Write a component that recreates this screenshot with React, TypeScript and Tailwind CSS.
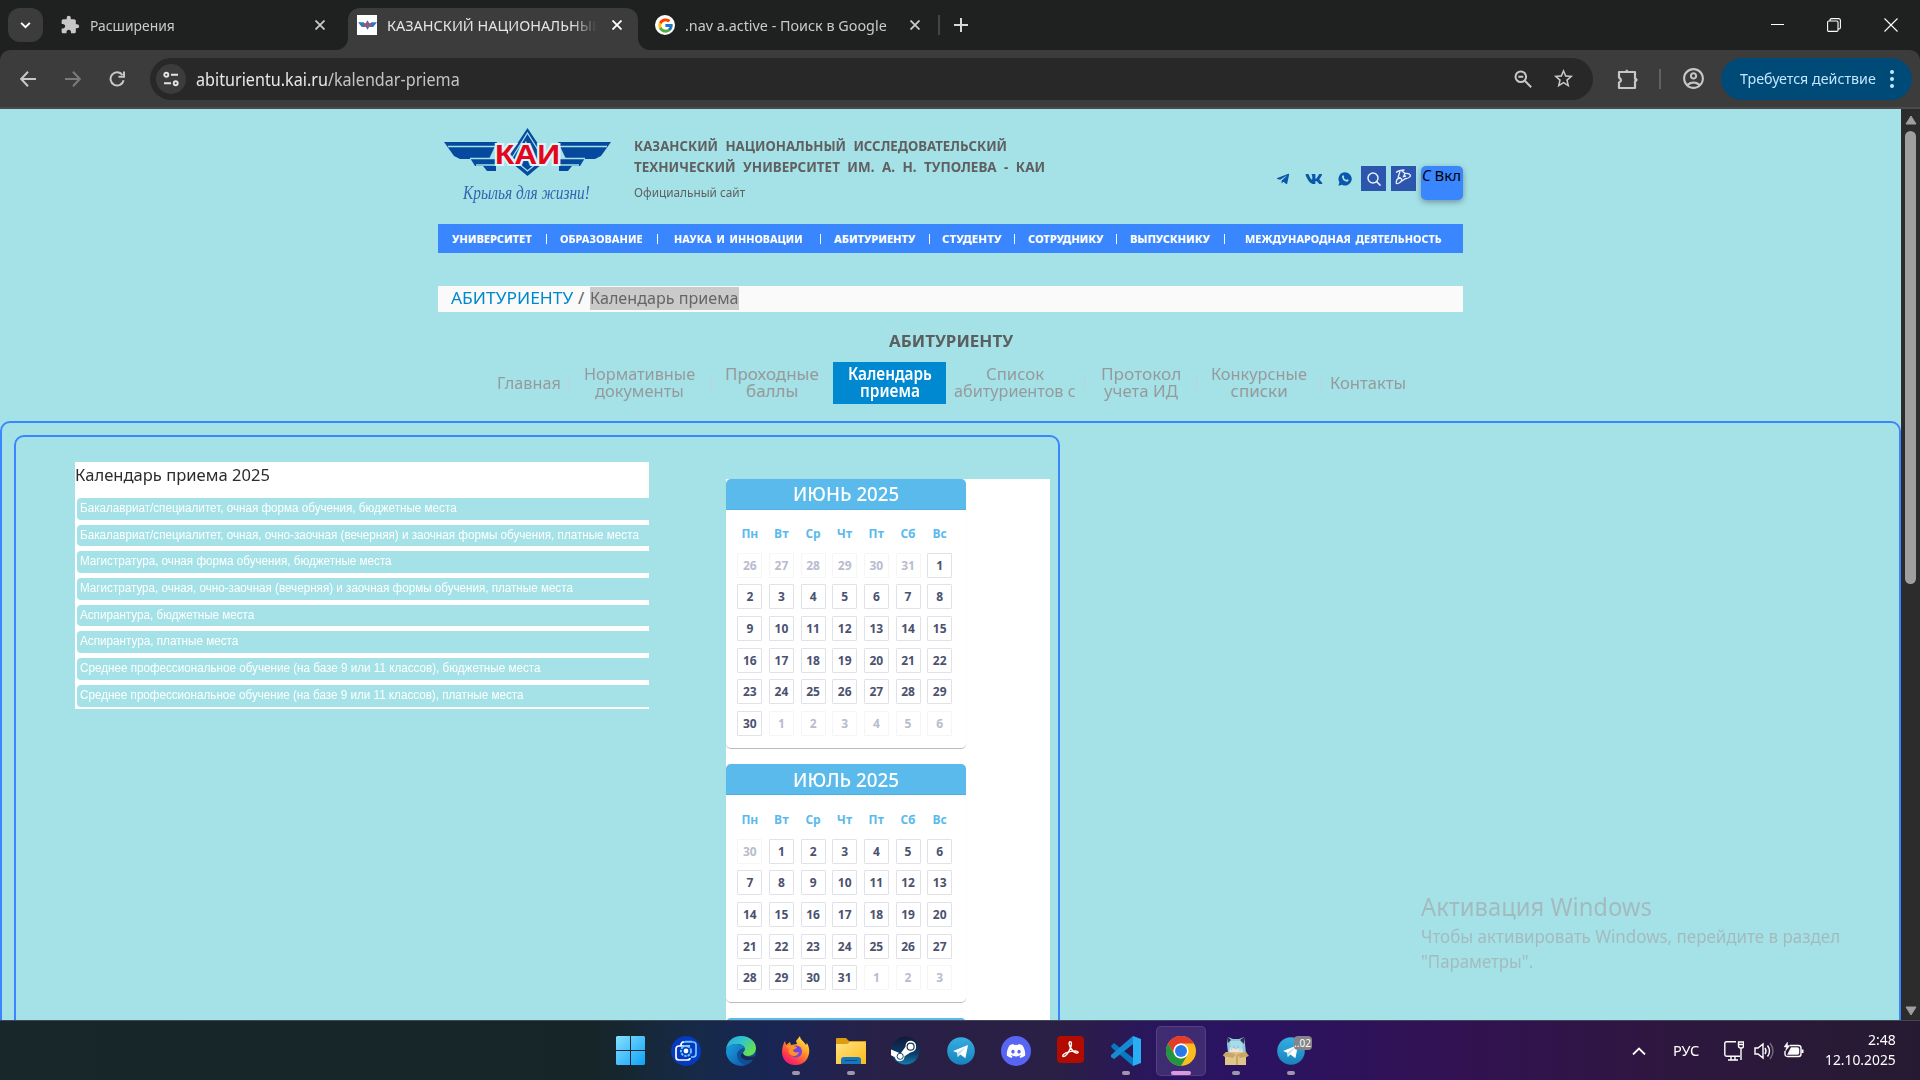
import { useLayoutEffect, useRef } from "react";
import type { ReactNode } from "react";
import clsx from "clsx";
import { FaDiscord, FaTelegramPlane, FaVk } from "react-icons/fa";
import { FcGoogle } from "react-icons/fc";
import { MdExtension, MdOutlineAccountCircle, MdStarBorder } from "react-icons/md";

const UI = "font-['Segoe_UI','Noto_Sans',sans-serif]";
const COMIC = "font-['Comic_Sans_MS','Noto_Sans',sans-serif]";

/* A single line of text that is squeezed or widened to fill the width of its box. */
function Fit({ className, children }: { className: string; children: ReactNode }) {
  const inner = useRef<HTMLSpanElement>(null);
  useLayoutEffect(() => {
    const el = inner.current;
    if (!el || !el.parentElement) return;
    el.style.transform = `scaleX(${el.parentElement.clientWidth / el.offsetWidth})`;
  }, []);
  return (
    <span className={clsx("block shrink-0 whitespace-nowrap", className)}>
      <span ref={inner} className="inline-block origin-left">
        {children}
      </span>
    </span>
  );
}

function Cross({ className }: { className?: string }) {
  return (
    <svg viewBox="0 0 10 10" className={clsx("size-[10px] shrink-0", className)} fill="none" stroke="currentColor" strokeWidth="1.8">
      <path d="M0.5 0.5l9 9M9.5 0.5l-9 9" />
    </svg>
  );
}

function TabBar() {
  return (
    <div className="flex h-[50px] shrink-0 bg-[#1f2120] text-[#c9cac9]">
      <div className="mt-2 ml-2 flex h-[34px] w-[35px] shrink-0 items-center justify-center rounded-xl bg-[#3c3c3c] text-white">
        <svg viewBox="0 0 12 8" className="h-[7px] w-[11px]" fill="none" stroke="currentColor" strokeWidth="2.2"><path d="M1 1l5 5 5-5" /></svg>
      </div>
      <div className="ml-[17px] flex h-[50px] w-[276px] shrink-0 items-center">
        <MdExtension className="size-5 shrink-0 text-[#c7c7c7]" />
        <Fit className="ml-[10px] w-[85px] text-[15px]">Расширения</Fit>
        <Cross className="ml-[140px]" />
      </div>
      <div className="flex h-[50px] w-[12px] shrink-0 items-end bg-[#3c3c3c]">
        <div className="h-[50px] w-[12px] rounded-br-xl bg-[#1f2120]" />
      </div>
      <div className="mt-2 flex h-[42px] w-[290px] shrink-0 items-center rounded-t-xl bg-[#3c3c3c] pb-2 text-[#e4e4e4]">
        <div className="ml-[9px] flex size-5 shrink-0 items-center justify-center bg-white">
          <svg viewBox="0 0 20 10" className="h-[10px] w-[19px]">
            <path d="M0 2h6l2 5H4zM20 2h-6l-2 5h4zM10 0l3 5-3 5-3-5z" fill="#2c7bc0" />
            <path d="M6 3h2v4H6zM9 3h2v4H9zM12 3h2v4h-2z" fill="#c9465a" />
          </svg>
        </div>
        <div className="ml-[10px] w-[210px] shrink-0 overflow-hidden [mask-image:linear-gradient(to_right,black_88%,transparent)]">
          <Fit className="w-[216px] text-[15px]">КАЗАНСКИЙ НАЦИОНАЛЬНЫЙ</Fit>
        </div>
        <Cross className="ml-[15px] text-white" />
      </div>
      <div className="h-[50px] w-[12px] shrink-0 bg-[#3c3c3c]">
        <div className="h-[50px] w-[12px] rounded-bl-xl bg-[#1f2120]" />
      </div>
      <div className="ml-[5px] flex h-[50px] items-center">
        <div className="flex size-5 shrink-0 items-center justify-center rounded-full bg-white"><FcGoogle className="size-[17px]" /></div>
        <Fit className="ml-[10px] w-[202px] text-[15px]">.nav a.active - Поиск в Google</Fit>
        <Cross className="ml-[23px]" />
        <div className="ml-[18px] h-5 w-[2px] bg-[#454545]" />
        <svg viewBox="0 0 14 14" className="ml-[14px] size-[14px]" stroke="#d8d8d8" strokeWidth="2"><path d="M7 0v14M0 7h14" /></svg>
      </div>
      <div className="ml-auto flex h-[49px] items-center pr-[22px] text-white">
        <div className="h-px w-[13px] bg-white" />
        <svg viewBox="0 0 14 14" className="ml-[43px] size-[14px]" fill="none" stroke="currentColor" strokeWidth="1.1">
          <rect x="0.6" y="3" width="10.4" height="10.4" rx="1.2" />
          <path d="M3 3V2.2Q3 .6 4.6 .6h6.8q2 0 2 2v7Q13.400 11 12 11h-1" />
        </svg>
        <svg viewBox="0 0 14 14" className="ml-[43px] size-[14px]" stroke="currentColor" strokeWidth="1.1"><path d="M.5.5l13 13M13.500.5l-13 13" /></svg>
      </div>
    </div>
  );
}

function Toolbar() {
  return (
    <div className="h-[59px] shrink-0 bg-[#1f2120]">
      <div className="flex h-[59px] items-center rounded-t-[10px] border-b-2 border-[#4b4b4b] bg-[#3c3c3c] text-[#c7c7c7]">
        <svg viewBox="0 0 16 16" className="ml-5 size-4 shrink-0" fill="none" stroke="currentColor" strokeWidth="2"><path d="M8 .8L1.200 8 8 15.200M1.200 8H16" /></svg>
        <svg viewBox="0 0 16 16" className="ml-[29px] size-4 shrink-0" fill="none" stroke="#7b7b7b" strokeWidth="2"><path d="M8 .8L14.800 8 8 15.200M14.800 8H0" /></svg>
        <svg viewBox="0 0 16 16" className="ml-[28px] size-4 shrink-0" fill="none" stroke="currentColor" strokeWidth="2"><path d="M13.500 4A6.600 6.600 0 1 0 14.600 9.200M15 .5v5.300H9.500" /></svg>
        <div className="ml-[25px] flex h-[42px] w-[1443px] shrink-0 items-center rounded-full bg-[#282828]">
          <div className="ml-[6px] flex size-[30px] shrink-0 items-center justify-center rounded-full bg-[#3c3c3c]">
            <svg viewBox="0 0 16 16" className="size-4" fill="none" stroke="#e3e3e3" strokeWidth="1.900"><circle cx="3.300" cy="3.700" r="2" /><path d="M8 3.700h7M1 12.300h7" /><circle cx="12.700" cy="12.300" r="2" /></svg>
          </div>
          <Fit className="mt-[2px] ml-[10px] w-[264px] text-[17.5px] text-[#e8e8e8]">abiturientu.kai.ru<span className="text-[#c4c4c4]">/kalendar-priema</span></Fit>
          <div className="ml-auto flex items-center pr-[18px]">
            <svg viewBox="0 0 18 18" className="size-[18px]" fill="none" stroke="currentColor" strokeWidth="2"><circle cx="6.800" cy="6.800" r="5.300" /><path d="M10.800 10.800l6.400 6.400M4.300 6.800h5" /></svg>
            <MdStarBorder className="ml-5 size-[23px]" />
          </div>
        </div>
        <svg viewBox="0 0 22 22" className="ml-6 size-[22px] shrink-0" fill="none" stroke="currentColor" strokeWidth="2.200">
          <path d="M2 4h16v6.500q3 1 0 3V20H2v-5.500q4-2 0-5z" strokeLinejoin="round" /><path d="M8 4q1.800-4 3.600 0zM18 10q4 2 0 4z" fill="currentColor" strokeWidth="1" />
        </svg>
        <div className="ml-[20px] h-5 w-[2px] bg-[#606060]" />
        <MdOutlineAccountCircle className="ml-[20px] size-[25px] shrink-0" />
        <div className="ml-[15px] flex h-[42px] w-[191px] shrink-0 items-center rounded-full bg-[#004a77] pl-[19px] text-[#c2e7ff]">
          <Fit className="w-[136px] text-[15px]">Требуется действие</Fit>
          <div className="ml-[14px] flex flex-col gap-[3px]">
            <i className="size-1 rounded-full bg-current" /><i className="size-1 rounded-full bg-current" /><i className="size-1 rounded-full bg-current" />
          </div>
        </div>
      </div>
    </div>
  );
}

function Logo() {
  return (
    <div className="mt-[19px] ml-[6px] w-[167px] shrink-0">
      <svg viewBox="0 0 167 48" className="h-[48px] w-[167px]">
        <path d="M0 14h53l-8 17H16L10 28z" fill="#064a9f" />
        <path d="M167 14h-53l8 17h29l6-3z" fill="#064a9f" />
        <path d="M26 30h26v13H43l-4-5h-8zM141 30h-26v13h9l4-5h8z" fill="#064a9f" />
        <path d="M4 18.500h50M113 18.500h50M26 30.500h26M115 30.500h26M32 37h22M113 37h22" stroke="#a5e2e8" strokeWidth="1.300" />
        <path d="M83.500 0L104 31 83.500 48 63 31z" fill="#064a9f" />
        <path d="M83.500 5L99 30 83.500 43 68 30z" fill="none" stroke="#a5e2e8" strokeWidth="1.300" />
        <text x="83.500" y="36" textAnchor="middle" textLength="65" lengthAdjust="spacingAndGlyphs" fontFamily="Liberation Sans, sans-serif" fontWeight="700" fontSize="27" fill="#e3061c" stroke="#dff3f8" strokeWidth="4" paintOrder="stroke">КАИ</text>
      </svg>
      <Fit className="mt-[3px] ml-[19px] w-[127px] font-['Segoe_Script','Liberation_Serif',serif] text-[19px] leading-[28px] text-[#2f66ad] italic">Крылья для жизни!</Fit>
    </div>
  );
}

const MAIN_NAV = [
  { label: "УНИВЕРСИТЕТ", box: "ml-[14px] w-[80px]", sep: "ml-[14px]" },
  { label: "ОБРАЗОВАНИЕ", box: "ml-[13px] w-[83px]", sep: "ml-[14px]" },
  { label: "НАУКА И ИННОВАЦИИ", box: "ml-[16px] w-[129px]", sep: "ml-[17px]" },
  { label: "АБИТУРИЕНТУ", box: "ml-[13px] w-[81px]", sep: "ml-[14px]" },
  { label: "СТУДЕНТУ", box: "ml-[12px] w-[60px]", sep: "ml-[12px]" },
  { label: "СОТРУДНИКУ", box: "ml-[13px] w-[75px]", sep: "ml-[13px]" },
  { label: "ВЫПУСКНИКУ", box: "ml-[13px] w-[80px]", sep: "ml-[14px]" },
  { label: "МЕЖДУНАРОДНАЯ ДЕЯТЕЛЬНОСТЬ", box: "ml-[20px] w-[197px]", sep: "" },
];

const SUB_NAV = [
  { lines: [["Главная", "w-[64px]"]], box: "w-[64px]", sep: "ml-[8px] mr-[14px]" },
  { lines: [["Нормативные", "w-[111px]"], ["документы", "w-[89px]"]], box: "w-[111px]", sep: "ml-[15px] mr-[14px]" },
  { lines: [["Проходные", "w-[94px]"], ["баллы", "w-[52px]"]], box: "w-[94px] mr-[14px]", sep: "" },
  { lines: [["Календарь", "w-[84px]"], ["приема", "w-[60px]"]], box: "w-[113px] bg-[#0088d1] text-white mr-[8px]", sep: "" },
  { lines: [["Список", "w-[58px]"], ["абитуриентов с", "w-[122px]"]], box: "w-[122px]", sep: "ml-[8px] mr-[16px]" },
  { lines: [["Протокол", "w-[80px]"], ["учета ИД", "w-[74px]"]], box: "w-[80px]", sep: "ml-[15px] mr-[14px]" },
  { lines: [["Конкурсные", "w-[96px]"], ["списки", "w-[57px]"]], box: "w-[96px]", sep: "ml-[14px] mr-[8px]" },
  { lines: [["Контакты", "w-[76px]"]], box: "w-[76px]", sep: "" },
];

function SiteHeader() {
  return (
    <div className={clsx("ml-[438px] w-[1025px]", COMIC)}>
      <div className="flex h-[115px]">
        <Logo />
        <div className="mt-[27px] ml-[23px] text-[#606060]">
          <Fit className="w-[373px] text-[13.5px] leading-[21px] font-bold [word-spacing:4px]">КАЗАНСКИЙ НАЦИОНАЛЬНЫЙ ИССЛЕДОВАТЕЛЬСКИЙ</Fit>
          <Fit className="w-[411px] text-[13.5px] leading-[21px] font-bold [word-spacing:4px]">ТЕХНИЧЕСКИЙ УНИВЕРСИТЕТ ИМ. А. Н. ТУПОЛЕВА - КАИ</Fit>
          <Fit className="mt-[4px] w-[111px] text-[12px] leading-[21px]">Официальный сайт</Fit>
        </div>
        <div className="mt-[57px] ml-auto flex h-[25px] items-center text-[#0a57ab]">
          <FaTelegramPlane className="size-[14px]" />
          <FaVk className="ml-[15px] size-[18px]" />
          <svg viewBox="0 0 14 14" className="ml-[15px] size-[14px]">
            <path d="M7.200.3a6.600 6.600 0 1 1-3.200 12.400L.4 13.700l1-3.500A6.600 6.600 0 0 1 7.200.3z" fill="currentColor" />
            <path d="M4.600 3.600q1-.8 1.500.6.400 1-.3 1.500.8 1.600 2.400 2.200.7-1 1.400-.6 1.500.6.900 1.400-1.200 1.700-3.300.6-2.800-1.300-3.200-4-.1-1 .6-1.700z" fill="#a5e2e8" />
          </svg>
          <div className="ml-[9px] flex size-[25px] items-center justify-center bg-[#2c55ae]">
            <svg viewBox="0 0 14 14" className="size-[14px]" fill="none" stroke="#e8f1fb" strokeWidth="1.500"><circle cx="6" cy="6" r="5" /><path d="M9.600 9.600l4 4" /></svg>
          </div>
          <div className="ml-[5px] flex size-[25px] items-start justify-center bg-[#2c55ae] pt-[3px]">
            <svg viewBox="0 0 17 16" className="h-4 w-[17px]" fill="none" stroke="#e8f1fb" strokeWidth="1.300">
              <path d="M1 3.500Q4 1 9.500 1M5 2.500L3 8.500M5.500 8.500Q1.500 9 1.200 13.500 1 15.500 4 14q3.500-2 2.500-4-1-1.500-4 0M6.500 1.500l3.500 3Q15 4 15.500 7q-2 3-5 2.500L7 12M10 4.500L8.500 7.500l2.500-.5" />
            </svg>
          </div>
          <div className="mt-[9px] ml-[5px] h-[34px] w-[42px] rounded-[5px] bg-[#3a86ff] pt-px pl-px text-black shadow-[0_2px_6px_rgba(0,0,0,0.35)]">
            <Fit className="w-[39px] text-[15px] leading-[16px]"><i>С</i> Вкл</Fit>
          </div>
        </div>
      </div>

      <div className="flex h-[29px] items-center bg-[#3a86ff] text-white">
        {MAIN_NAV.map((item) => (
          <div key={item.label} className="flex items-center">
            <Fit className={clsx("text-[11px] leading-[16px] font-extrabold [word-spacing:2px]", item.box)}>{item.label}</Fit>
            {item.sep && <i className={clsx("h-[10px] w-px bg-white", item.sep)} />}
          </div>
        ))}
      </div>

      <div className="mt-[33px] flex h-[26px] items-start bg-[#fafafa] pt-px pl-[13px] text-[17px] leading-[22px] text-[#666]">
        <Fit className="w-[122px] text-[#0088cc]">АБИТУРИЕНТУ</Fit>
        <span className="ml-[5px] w-[12px]">/</span>
        <Fit className="h-[23px] w-[149px] bg-[#cacaca]">Календарь приема</Fit>
      </div>

      <div className="flex h-[50px] justify-center pt-[20px]">
        <Fit className="w-[124px] text-[16px] leading-[19px] font-bold text-[#5b5f60]">АБИТУРИЕНТУ</Fit>
      </div>

      <div className="flex h-[42px] items-center pl-[59px] text-[17px] leading-[17px] text-[#969a9c]">
        {SUB_NAV.map((item) => (
          <div key={item.lines[0][0]} className="flex shrink-0 items-center">
            <div className={clsx("flex h-[42px] flex-col items-center justify-center pb-[2px]", item.box)}>
              {item.lines.map(([text, width]) => (
                <Fit key={text} className={clsx(width, "h-[17px]", item.box.includes("text-white") && "font-semibold")}>{text}</Fit>
              ))}
            </div>
            {item.sep && <i className={clsx("h-4 w-px bg-[#b9d3d8]", item.sep)} />}
          </div>
        ))}
      </div>
    </div>
  );
}

const PROGRAMS = [
  ["Бакалавриат/специалитет, очная форма обучения, бюджетные места", "w-[377px]"],
  ["Бакалавриат/специалитет, очная, очно-заочная (вечерняя) и заочная формы обучения, платные места", "w-[559px]"],
  ["Магистратура, очная форма обучения, бюджетные места", "w-[312px]"],
  ["Магистратура, очная, очно-заочная (вечерняя) и заочная формы обучения, платные места", "w-[493px]"],
  ["Аспирантура, бюджетные места", "w-[174px]"],
  ["Аспирантура, платные места", "w-[158px]"],
  ["Среднее профессиональное обучение (на базе 9 или 11 классов), бюджетные места", "w-[460px]"],
  ["Среднее профессиональное обучение (на базе 9 или 11 классов), платные места", "w-[443px]"],
];

const WEEKDAYS = ["Пн", "Вт", "Ср", "Чт", "Пт", "Сб", "Вс"];

interface CalendarProps {
  title: string;
  before: number[];
  days: number;
  after: number;
  className: string;
  titleClass: string;
  gridClass: string;
}

function Calendar({ title, before, days, after, className, titleClass, gridClass }: CalendarProps) {
  const cells = [
    ...before.map((day) => ({ day, muted: true })),
    ...Array.from({ length: days }, (_, i) => ({ day: i + 1, muted: false })),
    ...Array.from({ length: after }, (_, i) => ({ day: i + 1, muted: true })),
  ];
  return (
    <div className={clsx("w-[240px] shrink-0 rounded-[5px] border-b border-[#bcbcbc] bg-white shadow-[0_0_1px_rgba(0,0,0,0.12)]", className)}>
      <div className="flex h-[31px] justify-center rounded-t-[5px] border-b border-[#4fb0e4] bg-[#5abaec] text-white">
        <Fit className={clsx("w-[106px] text-[19px] font-medium", titleClass, COMIC)}>{title}</Fit>
      </div>
      <div className={clsx("ml-[8px] grid grid-cols-[repeat(7,31.650px)] text-center font-['Open_Sans','Noto_Sans',sans-serif] text-[12px] font-bold", gridClass)}>
        {WEEKDAYS.map((d) => (
          <div key={d} className="h-[30.400px] leading-[23px] text-[#5abaec]">{d}</div>
        ))}
        {cells.map(({ day, muted }, i) => (
          <div key={i} className="flex h-[31.600px] justify-center">
            <div className={clsx("size-[25px] rounded-[1px] border leading-[24px]", muted ? "border-[#f5f5f8] text-[#b8bccd]" : "border-[#e1e1ea] text-[#4b5270]")}>{day}</div>
          </div>
        ))}
      </div>
    </div>
  );
}

function Content() {
  return (
    <div className="mt-[17px] h-[700px] w-[1901px] rounded-[10px] border-2 border-[#3a86ff] pt-3 pl-3">
      <div className="flex h-[690px] w-[1046px] rounded-[10px] border-2 border-[#3a86ff] pl-[59px]">
        <div className="mt-[25px] h-[247px] w-[574px] shrink-0 bg-white">
          <Fit className={clsx("h-[36px] w-[195px] text-[17px] leading-[25px] text-[#2d2d2d]", COMIC)}>Календарь приема 2025</Fit>
          {PROGRAMS.map(([text, width]) => (
            <div key={text} className="ml-[2px] h-[26.700px]">
              <div className="flex h-[21.700px] items-start rounded-l bg-[#a5e2e8] pl-[3px] text-white">
                <Fit className={clsx("font-['Liberation_Sans',Arial,sans-serif] text-[12px] leading-[20px]", width)}>{text}</Fit>
              </div>
            </div>
          ))}
        </div>
        <div className="mt-[42px] ml-[77px] w-[324px] shrink-0 bg-white">
          <Calendar title="ИЮНЬ 2025" before={[26, 27, 28, 29, 30, 31]} days={30} after={6} className="h-[270px]" titleClass="leading-[30px]" gridClass="mt-[12.400px]" />
          <Calendar title="ИЮЛЬ 2025" before={[30]} days={31} after={3} className="mt-[15px] h-[239px]" titleClass="leading-[32px]" gridClass="mt-[13.400px]" />
          <Calendar title="АВГУСТ 2025" before={[28, 29, 30, 31]} days={31} after={0} className="mt-[15px] h-[239px]" titleClass="leading-[30px]" gridClass="mt-[13px]" />
        </div>
      </div>
    </div>
  );
}

function AppSlot({ mark, active, children }: { mark?: boolean; active?: boolean; children: ReactNode }) {
  return (
    <div className="flex h-[59px] w-[55px] shrink-0 items-center justify-center">
      <div className={clsx("flex h-[50px] w-[50px] flex-col items-center rounded-[5px] border pt-[9px]", active ? "border-white/10 bg-white/10" : "border-transparent")}>
        <div className="flex size-[30px] shrink-0 items-center justify-center">{children}</div>
        {active && <i className="mt-[5px] h-1 w-5 shrink-0 rounded-full bg-[#d99ae0]" />}
        {mark && <i className="mt-[5px] h-1 w-2 shrink-0 rounded-full bg-[#9d97ac]" />}
      </div>
    </div>
  );
}

function TelegramIcon() {
  return (
    <svg viewBox="0 0 28 28" className="size-7">
      <defs><linearGradient id="tg" x1="0" y1="0" x2="0" y2="1"><stop stopColor="#36aee2" /><stop offset="1" stopColor="#1783bd" /></linearGradient></defs>
      <circle cx="14" cy="14" r="13.800" fill="url(#tg)" />
      <path d="M6 14L21 8l-2.600 13.300-5-3.700-2.600 2.500-.6-4.300z" fill="#fff" /><path d="M10.200 15.700L19 9.700l-6.400 7.400-1.800 3z" fill="#c4deed" />
    </svg>
  );
}

function Taskbar() {
  return (
    <div className={clsx("flex h-[60px] shrink-0 items-center border-t border-[#454558] bg-[linear-gradient(to_right,#17272a_0%,#162528_31%,#162a47_36%,#182554_40%,#292047_46%,#2a1f44_55%,#2a1462_61%,#2b1361_66%,#321252_76%,#2e173f_87%,#251b31_100%)] text-white", UI)}>
      <div className="ml-[603px] flex">
        <AppSlot>
          <svg viewBox="0 0 29 29" className="mr-px size-[29px]">
            <defs><linearGradient id="win" x1="0" y1="0" x2="1" y2="1"><stop stopColor="#87e0ff" /><stop offset="1" stopColor="#0da2f7" /></linearGradient></defs>
            <path d="M1 0h13v14H0V1zM15 0h13l1 1v13H15zM0 15h14v14H1l-1-1zM15 15h14v13l-1 1H15z" fill="url(#win)" />
          </svg>
        </AppSlot>
        <AppSlot>
          <svg viewBox="0 0 30 30" className="size-[30px]" fill="none">
            <circle cx="15" cy="15" r="15" fill="#0638c0" />
            <path d="M11 6h11q3 0 3 3v9q0 3-3 3h-2M10 9q-1 0-1 1M14 5.500h7" stroke="#6ec8ff" strokeWidth="1.700" />
            <path d="M19 10H8q-3 0-3 3v8q0 3 3 3h8q3 0 3-2M10 10V9q0-3 3-3" stroke="#fff" strokeWidth="1.700" />
            <circle cx="15" cy="15" r="5" stroke="#6ec8ff" strokeWidth="2" strokeDasharray="2.500 1" /><circle cx="15" cy="15" r="2.400" fill="#fff" />
          </svg>
        </AppSlot>
        <AppSlot>
          <svg viewBox="0 0 30 30" className="size-[30px]">
            <defs>
              <linearGradient id="edgeTop" x1="0" y1="0" x2="1" y2=".6"><stop stopColor="#29a5dd" /><stop offset=".5" stopColor="#32c5cb" /><stop offset="1" stopColor="#67e04c" /></linearGradient>
              <linearGradient id="edgeLow" x1="0" y1="0" x2="1" y2="1"><stop stopColor="#1ba1e3" /><stop offset="1" stopColor="#0c59a5" /></linearGradient>
            </defs>
            <circle cx="15" cy="15" r="15" fill="#0f4f97" />
            <path d="M0 14C1 5 7 0 15 0c9 0 15 6 15 12 0 5-4 8-8 8-3 0-5-1-5-3 0-1 2-2 2-4 0-3-4-5-8-5-6 0-10 3-11 6z" fill="url(#edgeTop)" />
            <path d="M0 15C1 11 5 8 10 8c5 0 9 3 9 5 0-2-8 0-8 6 0 5 4 9 9 10C10 32 0 25 0 15z" fill="url(#edgeLow)" />
            <path d="M17 17c0 2 3 4 7 4 3 0 5-1 5-1l-1 3c-1 0-4 2-8 1-5-1-7-5-3-7z" fill="#1a2550" />
          </svg>
        </AppSlot>
        <AppSlot mark>
          <svg viewBox="0 0 30 30" className="size-[30px]">
            <defs>
              <linearGradient id="ff" x1=".85" y1="0" x2=".2" y2="1"><stop stopColor="#fff44f" /><stop offset=".4" stopColor="#ff9a25" /><stop offset=".75" stopColor="#ff3b4b" /><stop offset="1" stopColor="#e31587" /></linearGradient>
            </defs>
            <path d="M4 5l1 4 4-3 1 3 6-1-1-3 4-5c0 4 4 5 6 9l1-2c3 5 3 11 0 16-3 5-8 6-12 6C6 29 1 23 1 16c0-4 1-8 3-11z" fill="url(#ff)" />
            <circle cx="15" cy="15.500" r="6" fill="#7542e5" />
            <path d="M5 10c4-1 8 0 11 1-1 2-3 2-4 3 0 2 3 3 6 2-1 4-5 5-8 3-2-1-3-4-2-6z" fill="#ff9224" />
          </svg>
        </AppSlot>
        <AppSlot mark>
          <svg viewBox="0 0 30 26" className="h-[26px] w-[30px]">
            <defs><linearGradient id="fold" x1="0" y1="0" x2="1" y2="1"><stop stopColor="#ffe383" /><stop offset="1" stopColor="#fbbb18" /></linearGradient></defs>
            <path d="M0 1q0-1 1-1h9l3 3h17v8H0z" fill="#dc9b11" /><path d="M0 6h11l3-2h15l1 1v21H0z" fill="url(#fold)" />
            <path d="M5 26v-4q0-3 3-3h14q3 0 3 3v4z" fill="#1777bd" /><path d="M9 22.500h12" stroke="#0a4c87" />
          </svg>
        </AppSlot>
        <AppSlot>
          <svg viewBox="0 0 30 30" className="size-[29px]">
            <defs><linearGradient id="steam" x1="0" y1="0" x2="0" y2="1"><stop stopColor="#111a35" /><stop offset=".6" stopColor="#0c3a66" /><stop offset="1" stopColor="#137fae" /></linearGradient></defs>
            <circle cx="15" cy="15" r="14.500" fill="url(#steam)" />
            <path d="M0 14l10 4 5-7q0-6 6-6 5 1 5 6 0 5-6 6l-6 4q0 5-5 5-4 0-5-4L0 20z" fill="#fff" />
            <circle cx="20.300" cy="11" r="3.600" fill="none" stroke="#153353" strokeWidth="1.200" /><circle cx="9.500" cy="21" r="3.200" fill="none" stroke="#153f66" />
          </svg>
        </AppSlot>
        <AppSlot><TelegramIcon /></AppSlot>
        <AppSlot>
          <div className="flex size-[30px] items-center justify-center rounded-full bg-[#5865f2]"><FaDiscord className="size-5" /></div>
        </AppSlot>
        <AppSlot>
          <div className="mb-[3px] flex size-[27px] items-center justify-center rounded-[4px] bg-[#b30b00]">
            <svg viewBox="0 0 20 20" className="size-[19px]" fill="none" stroke="#fff" strokeWidth="1.500"><path d="M9 2q3-1 1.500 5Q8 14 4 17q-3 1-2-1 2-3 9-4 7-1 7 1-1 2-5-1Q9 8 8.500 4q0-1.500.5-2z" /></svg>
          </div>
        </AppSlot>
        <AppSlot mark>
          <svg viewBox="0 0 30 30" className="size-[30px]">
            <path d="M0 10l3-3 19 15v8L1 12z" fill="#0879be" /><path d="M0 20L22 0v8L3 23z" fill="#0a69ab" /><path d="M1 20l-1-1v2l3 2L22 8V0L0 19z" fill="#168bd2" /><path d="M22 0l8 3v24l-8 3z" fill="#29adf5" />
          </svg>
        </AppSlot>
        <AppSlot active>
          <svg viewBox="0 0 30 30" className="size-[30px]">
            <circle cx="15" cy="15" r="15" fill="#fbbc1e" />
            <path d="M2 7.500A15 15 0 0 1 28 7.500H15A7.500 7.500 0 0 0 8.500 18.800z" fill="#e33b2e" />
            <path d="M2 7.500A15 15 0 0 0 15 30l6.500-11.200a7.500 7.500 0 0 1-13 0z" fill="#229544" />
            <circle cx="15" cy="15" r="7.500" fill="#fff" /><circle cx="15" cy="15" r="6" fill="#2878e8" />
          </svg>
        </AppSlot>
        <AppSlot mark>
          <svg viewBox="0 0 26 30" className="h-[30px] w-[26px]">
            <path d="M5 1l5 2h6l5-2 1 7 1 9H5L4 8z" fill="#91c9dc" /><path d="M5 1l3 3-3 3zM21 1l-4 3 4 4z" fill="#303446" />
            <path d="M7 11l6 2 6-2 1 7H6z" fill="#f3dfdc" /><path d="M7 5l1 10 3-6 2 5 2-6 2 8 3-7-3-4z" fill="#a9dcea" />
            <path d="M3 16h20l2 4-2 1v8H2v-8l-2-2z" fill="#e0c488" /><path d="M3 16l10 2-3 4-10-2zM23 16l-9 2 3 4 9-2z" fill="#c7a765" /><path d="M14 19v10" stroke="#a98a51" />
          </svg>
        </AppSlot>
        <AppSlot mark>
          <div className="relative">
            <TelegramIcon />
            <span className="absolute -top-px left-[17px] h-[14px] w-[18px] rounded-[4px] bg-[#858589] text-center text-[10px] leading-[14px]">..02</span>
          </div>
        </AppSlot>
      </div>
      <svg viewBox="0 0 14 8" className="ml-[314px] h-2 w-[14px]" fill="none" stroke="currentColor" strokeWidth="1.800"><path d="M1 7.500l6-6 6 6" /></svg>
      <Fit className="ml-[27px] w-[26px] text-[14px]">РУС</Fit>
      <svg viewBox="0 0 20 20" className="ml-[25px] size-5" fill="none" stroke="currentColor" strokeWidth="1.400">
        <path d="M12 .8H2.500Q.8.800.8 2.500v11q0 1.700 1.700 1.700H16M4 19h10M7 15.500V19M11 15.500V19M14.500 1h5v4q0 2-2.500 2t-2.500-2zM14.500 3.500h5M17 7v12" />
      </svg>
      <svg viewBox="0 0 20 18" className="ml-[10px] h-[18px] w-5" fill="none" stroke="currentColor" strokeWidth="1.400">
        <path d="M1 6h3l5-4v14l-5-4H1zM11 6q2 3 0 6M13.500 3.500q4 5.500 0 11" /><path d="M16 1q6 8 0 16" opacity=".35" />
      </svg>
      <svg viewBox="0 0 20 18" className="ml-[10px] h-[18px] w-5" fill="none" stroke="currentColor" strokeWidth="1.400">
        <path d="M6 3.500h8.500q2.500 0 2.500 2.500v6q0 2.500-2.500 2.500h-11Q1 14.500 1 12V9" /><path d="M7 5.500h6.500q1.500 0 1.500 1.500v4q0 1.500-1.500 1.500H3.500Z M3.500 0L0 5h2.500L1.500 9 6 3.500H3.500z" fill="currentColor" strokeWidth=".4" /><path d="M18.500 7.500v3.500" strokeWidth="2" />
      </svg>
      <div className="ml-auto flex flex-col items-end pr-6 pb-[3px] text-[15px] leading-5">
        <Fit className="w-[28px]">2:48</Fit>
        <Fit className="w-[71px]">12.10.2025</Fit>
      </div>
    </div>
  );
}

export default function App() {
  return (
    <div className={clsx("flex h-[1080px] w-[1920px] flex-col overflow-hidden", UI)}>
      <TabBar />
      <Toolbar />
      <div className="relative flex h-[911px] shrink-0 overflow-hidden bg-[#a5e2e8]">
        <div className="h-[911px] w-[1901px] shrink-0 overflow-hidden">
          <SiteHeader />
          <Content />
        </div>
        <div className="flex w-[19px] shrink-0 flex-col items-center bg-[#2c2c2c]">
          <svg viewBox="0 0 12 10" className="mt-[6px] h-[10px] w-3" fill="#9f9f9f" stroke="#9f9f9f" strokeLinejoin="round"><path d="M6 1L11 9H1z" /></svg>
          <div className="mt-[6px] h-[453px] w-[11px] rounded-full bg-[#9f9f9f]" />
          <svg viewBox="0 0 12 10" className="mt-auto mb-[4px] h-[10px] w-3" fill="#9f9f9f" stroke="#9f9f9f" strokeLinejoin="round"><path d="M6 9L1 1h10z" /></svg>
        </div>
        <div className="absolute top-[779px] left-[1421px] text-[#a3bbbe]">
          <Fit className="w-[231px] text-[25px] leading-[36px]">Активация Windows</Fit>
          <Fit className="w-[419px] text-[18px] leading-[25px]">Чтобы активировать Windows, перейдите в раздел</Fit>
          <Fit className="w-[112px] text-[18px] leading-[25px]">"Параметры".</Fit>
        </div>
      </div>
      <Taskbar />
    </div>
  );
}
